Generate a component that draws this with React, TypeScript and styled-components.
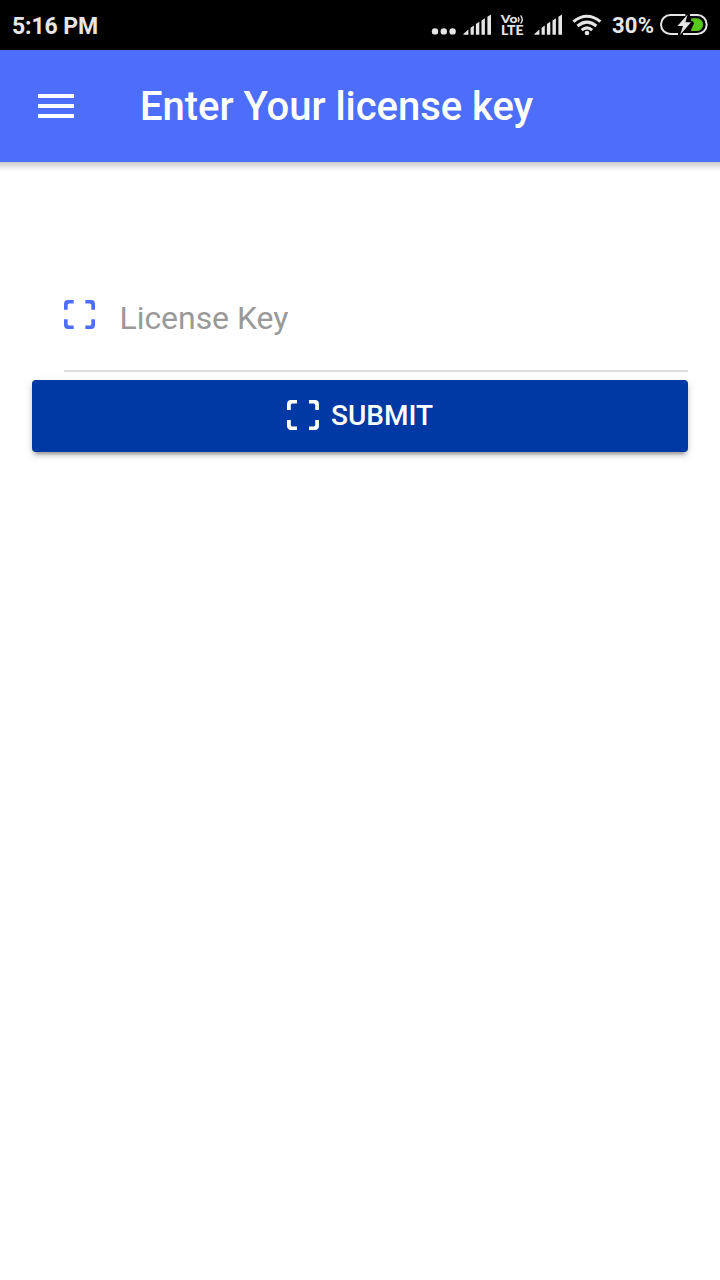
import React from "react";
import styled, { createGlobalStyle } from "styled-components";

const GlobalStyle = createGlobalStyle`
  * { box-sizing: border-box; }
  body { margin: 0; background: #fff; font-family: Roboto, "Liberation Sans", sans-serif; }
`;

const Screen = styled.div`
  min-height: 1280px;
  display: flex;
  flex-direction: column;
  background: #fff;
  overflow: hidden;
`;

const StatusBar = styled.div`
  height: 50px;
  display: flex;
  align-items: center;
  justify-content: space-between;
  padding: 2px 12px 0;
  background: #000;
  color: #e6e6e6;
  font-size: 23px;
  font-weight: 700;
  line-height: 50px;
`;

const Clock = styled.span`
  padding-top: 2px;
  letter-spacing: -0.1px;
`;

const StatusIcons = styled.div`
  display: flex;
  align-items: center;
  height: 48px;
`;

const Glyphs = styled.svg`
  display: block;
  flex: none;
  margin-top: -2px;
`;

const Percent = styled.span`
  width: 48px;
  white-space: nowrap;
  font-size: 22px;
  letter-spacing: 0.2px;
`;

const Header = styled.header`
  height: 112px;
  display: flex;
  align-items: center;
  padding-left: 38px;
  background: #4c6efb;
`;

const HeaderShadow = styled.div`
  height: 10px;
  background: linear-gradient(#cdcdcd, #d9d9d9 25%, #f2f2f2 65%, #fff);
`;

const MenuButton = styled.button`
  width: 36px;
  height: 24px;
  padding: 0;
  border: 0;
  display: flex;
  flex-direction: column;
  justify-content: space-between;
  background: none;
`;

const MenuLine = styled.span`
  width: 36px;
  height: 4px;
  background: #fff;
`;

const Title = styled.h1`
  margin: 0 0 0 66px;
  padding-top: 2px;
  color: #fff;
  font-size: 40px;
  font-weight: 500;
  line-height: 48px;
  letter-spacing: -0.04px;
`;

const Form = styled.main`
  display: flex;
  flex-direction: column;
  padding: 88px 32px 0;
`;

const Field = styled.label`
  height: 112px;
  margin: 0 0 8px 32px;
  display: flex;
  align-items: flex-start;
  border-bottom: 2px solid #dedede;
`;

const FieldIcon = styled.span`
  display: flex;
  margin-top: 40px;
`;

const KeyInput = styled.input`
  flex: 1;
  min-width: 0;
  height: 40px;
  margin: 38px 0 0 24.5px;
  padding: 0;
  border: 0;
  outline: 0;
  background: none;
  font: 400 32px/40px Roboto, "Liberation Sans", sans-serif;
  letter-spacing: -0.05px;
  &::placeholder { color: #999; opacity: 1; }
`;

const SubmitButton = styled.button`
  height: 72px;
  border: 0;
  border-radius: 4px;
  padding: 0;
  display: flex;
  align-items: center;
  justify-content: center;
  gap: 12px;
  background: #0039a3;
  color: #fff;
  font: 500 28px/36px Roboto, "Liberation Sans", sans-serif;
  box-shadow: 0 4px 4px rgba(0, 0, 0, 0.14), 0 6px 2px -4px rgba(0, 0, 0, 0.2),
    0 2px 10px rgba(0, 0, 0, 0.12);
`;

const SubmitIcon = styled.span`
  display: flex;
  padding-bottom: 2px;
`;

function ScanIcon({ color, width, height }: { color: string; width: number; height: number }) {
  return (
    <svg width={width} height={height} viewBox="0 0 32 30" preserveAspectRatio="none" fill={color}>
      <path d="M4 0H10V3.6H5.4Q3.8 3.6 3.8 5.2V10H0V4.4Q0 0 4 0Z" />
      <path d="M28 0H22V3.6H26.6Q28.2 3.6 28.2 5.2V10H32V4.4Q32 0 28 0Z" />
      <path d="M4 30H10V26.4H5.4Q3.8 26.4 3.8 24.8V20H0V25.6Q0 30 4 30Z" />
      <path d="M28 30H22V26.4H26.6Q28.2 26.4 28.2 24.8V20H32V25.6Q32 30 28 30Z" />
    </svg>
  );
}

function SignalBars({ x }: { x: number }) {
  return (
    <g transform={`translate(${x} 0)`}>
      <path d="M0 34.7V34L5 29.6V34.7Z" />
      <path d="M7.2 34.7V27.8L10.4 25.6V34.7Z" />
      <path d="M12.5 34.7V24L15.9 21.8V34.7Z" />
      <path d="M18.1 34.7V20.4L21.5 18.2V34.7Z" />
      <path d="M24 34.7V16.8L27.6 14.6V34.7Z" />
    </g>
  );
}

function NetworkIcons() {
  return (
    <Glyphs width="184" height="50" viewBox="428 0 184 50" fill="#e6e6e6">
      <circle cx="435" cy="31.4" r="3.2" />
      <circle cx="443.8" cy="31.4" r="3.2" />
      <circle cx="452.6" cy="31.4" r="3.2" />
      <SignalBars x={463.4} />
      <g fontFamily="Lato, sans-serif" fontWeight="900">
        <text x="500.8" y="23.2" fontSize="12" textLength="16.6" lengthAdjust="spacingAndGlyphs">Vo</text>
        <text x="501" y="35.2" fontSize="12.4" textLength="22.6" lengthAdjust="spacingAndGlyphs">LTE</text>
      </g>
      <path d="M518 17.2Q520 19.6 518 22M520.6 15.4Q524 19.6 520.6 23.6" fill="none" stroke="#e6e6e6" strokeWidth="1.3" />
      <SignalBars x={534.4} />
      <g fill="none" stroke="#e6e6e6" strokeWidth="3">
        <path d="M573.4 21.6Q587 10.8 600.4 21.6" />
        <path d="M577.5 26Q587 18.2 596.4 26" />
        <path d="M581.7 30.2Q587 25.6 592.2 30.2" />
      </g>
      <circle cx="587" cy="33" r="2.3" />
    </Glyphs>
  );
}

function BatteryIcon() {
  return (
    <Glyphs width="48" height="50" viewBox="660 0 48 50">
      <path d="M685.4 15H670.5A9.5 9.5 0 0 0 670.5 34H678M690 15H697.2A9.5 9.5 0 0 1 697.2 34H683" fill="none" stroke="#e6e6e6" strokeWidth="2" />
      <path d="M691.4 18.2H696.7A6.4 6.4 0 0 1 696.7 31H691.2V29.4L694 23.4L693 21.2H691Z" fill="#57c718" />
      <path d="M687.6 14.6L677.4 26H683L680 34.9L691 22.2H685.4Z" fill="#e6e6e6" />
    </Glyphs>
  );
}

export default function App() {
  return (
    <>
      <GlobalStyle />
      <Screen>
        <StatusBar>
          <Clock>5:16 PM</Clock>
          <StatusIcons>
            <NetworkIcons />
            <Percent>30%</Percent>
            <BatteryIcon />
          </StatusIcons>
        </StatusBar>
        <Header>
          <MenuButton aria-label="Menu">
            <MenuLine />
            <MenuLine />
            <MenuLine />
          </MenuButton>
          <Title>Enter Your license key</Title>
        </Header>
        <HeaderShadow />
        <Form>
          <Field>
            <FieldIcon>
              <ScanIcon color="#4c6efb" width={31} height={29} />
            </FieldIcon>
            <KeyInput placeholder="License Key" />
          </Field>
          <SubmitButton>
            <SubmitIcon>
              <ScanIcon color="#fff" width={32} height={30} />
            </SubmitIcon>
            <span>SUBMIT</span>
          </SubmitButton>
        </Form>
      </Screen>
    </>
  );
}
